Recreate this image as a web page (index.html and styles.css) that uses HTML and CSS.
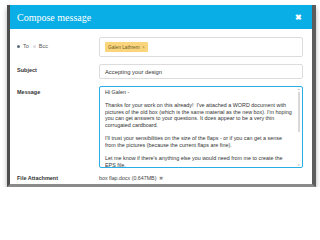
FILE: index.html
```html
<!DOCTYPE html>
<html lang="en">
<head>
  <meta charset="UTF-8" />
  <title>Compose message</title>
  <link rel="stylesheet" href="styles.css">
</head>
<body>

 <div class="modal">
  <div class="modal-header">
    <span class="modal-title">Compose message</span>
    <span class="modal-close">&#10006;</span>
  </div>

  <div class="modal-body">
    <!-- destinatari -->
    <div class="form-row row-to">
      <div class="recipient-type">
        <span class="radio on"></span><span>To</span>
        <span class="radio"></span><span>Bcc</span>
      </div>
      <div class="field field-to">
        <span class="tag">Galen Lathrem <span class="tag-x">&times;</span></span>
      </div>
    </div>

    <div class="form-row row-subject">
      <label>Subject</label>
      <div class="field">Accepting your design</div>
    </div>

    <div class="form-row row-message">
      <label>Message</label>
      <div class="field textarea">
        <div class="textarea-text">
          <p>Hi Galen -</p>
          <p>Thanks for your work on this already!&nbsp; I've attached a WORD document with pictures of the old box (which is the same material as the new box). I'm hoping you can get answers to your questions. It does appear to be a very thin corrugated cardboard.</p>
          <p>I'll trust your sensibilities on the size of the flaps - or if you can get a sense from the pictures (because the current flaps are fine).</p>
          <p>Let me know if there's anything else you would need from me to create the EPS file.</p>
        </div>
        <div class="scrollbar">
          <span class="arrow">&#9652;</span>
          <span class="thumb"></span>
          <span class="arrow">&#9662;</span>
        </div>
      </div>
    </div>

    <div class="form-row row-file">
      <label>File Attachment</label>
      <div class="attachment">box flap.docx (0.647MB) <span class="remove">&#10006;</span></div>
    </div>
  </div>
 </div>

</body>
</html>
```

FILE: styles.css
```css
body {
  margin: 0;
  padding: 5px 0 0 7px;
  background: #fff;
  font-family: "Liberation Sans", Arial, sans-serif;
  color: #333;
}
.modal {
  width: 302px;
  background: white;
  border-left: 3px solid #4d4d4d;
  border-right: 4px solid #5c5c5c;
  border-bottom: 3px solid #8a8a8a;
  box-shadow: 0 3px 5px rgba(0,0,0,0.3);
  padding-bottom: 3px;
}
.modal-header {
  height: 24px;
  background: #0aaee6;
  display: flex;
  align-items: center;
  justify-content: space-between;
  padding: 0 10px 0 7px;
}
.modal-title {
  font-family: "Liberation Serif", "Times New Roman", serif;
  font-size: 10px;
  color: white;
}
.modal-close {
  color: white;
  font-size: 8px;
  font-weight: bold;
}
.modal-body {
  padding: 8px 9px 0 7px;
}
.form-row {
  display: grid;
  grid-template-columns: 82px 1fr;
  margin-bottom: 7px;
}
.form-row label {
  font-size: 5.5px;
  font-weight: bold;
  color: #333;
  padding-top: 3px;
}
.recipient-type {
  display: flex;
  align-items: center;
  gap: 3px;
  height: 10px;
  margin-top: 4px;
  font-size: 5.5px;
  color: #555;
}
.radio {
  width: 3px;
  height: 3px;
  border-radius: 50%;
  background: #dcdcdc;
  margin-left: 1px;
}
.radio.on {
  background: #5a6f80;
  margin-left: 0;
}
.recipient-type .radio:nth-of-type(2) {
  margin-left: 2px;
}
.field {
  border: 1px solid #dcdcdc;
  border-radius: 2px;
  background: white;
  font-size: 5.8px;
  color: #333;
  padding: 0 5px;
  height: 13px;
  display: flex;
  align-items: center;
}
.field-to {
  height: 18px;
}
.tag {
  background: #fbd57c;
  border-radius: 1px;
  font-size: 4.8px;
  color: #6b5a2a;
  padding: 2.5px 3px;
}
.tag-x {
  color: #b09050;
  margin-left: 1px;
}
.textarea {
  height: 80px;
  border: 1px solid #28aee4;
  align-items: stretch;
  padding: 0 1px 0 5px;
}
.textarea-text {
  flex: 1;
  font-size: 5.4px;
  line-height: 6.6px;
  color: #333;
  padding-top: 2px;
  overflow: hidden;
}
.textarea-text p {
  margin: 0 0 6.6px 0;
}
.scrollbar {
  width: 4px;
  display: flex;
  flex-direction: column;
  align-items: center;
  font-size: 3px;
  color: #999;
  margin-left: 3px;
}
.scrollbar .thumb {
  width: 2px;
  height: 40px;
  background: #d8d8d8;
  margin: 1px 0 auto;
}
.row-file {
  margin-bottom: 0;
}
.row-file label {
  padding-top: 0;
}
.attachment {
  font-size: 5.3px;
  color: #444;
}
.remove {
  color: #888;
  font-size: 5px;
  margin-left: 1px;
}
```
